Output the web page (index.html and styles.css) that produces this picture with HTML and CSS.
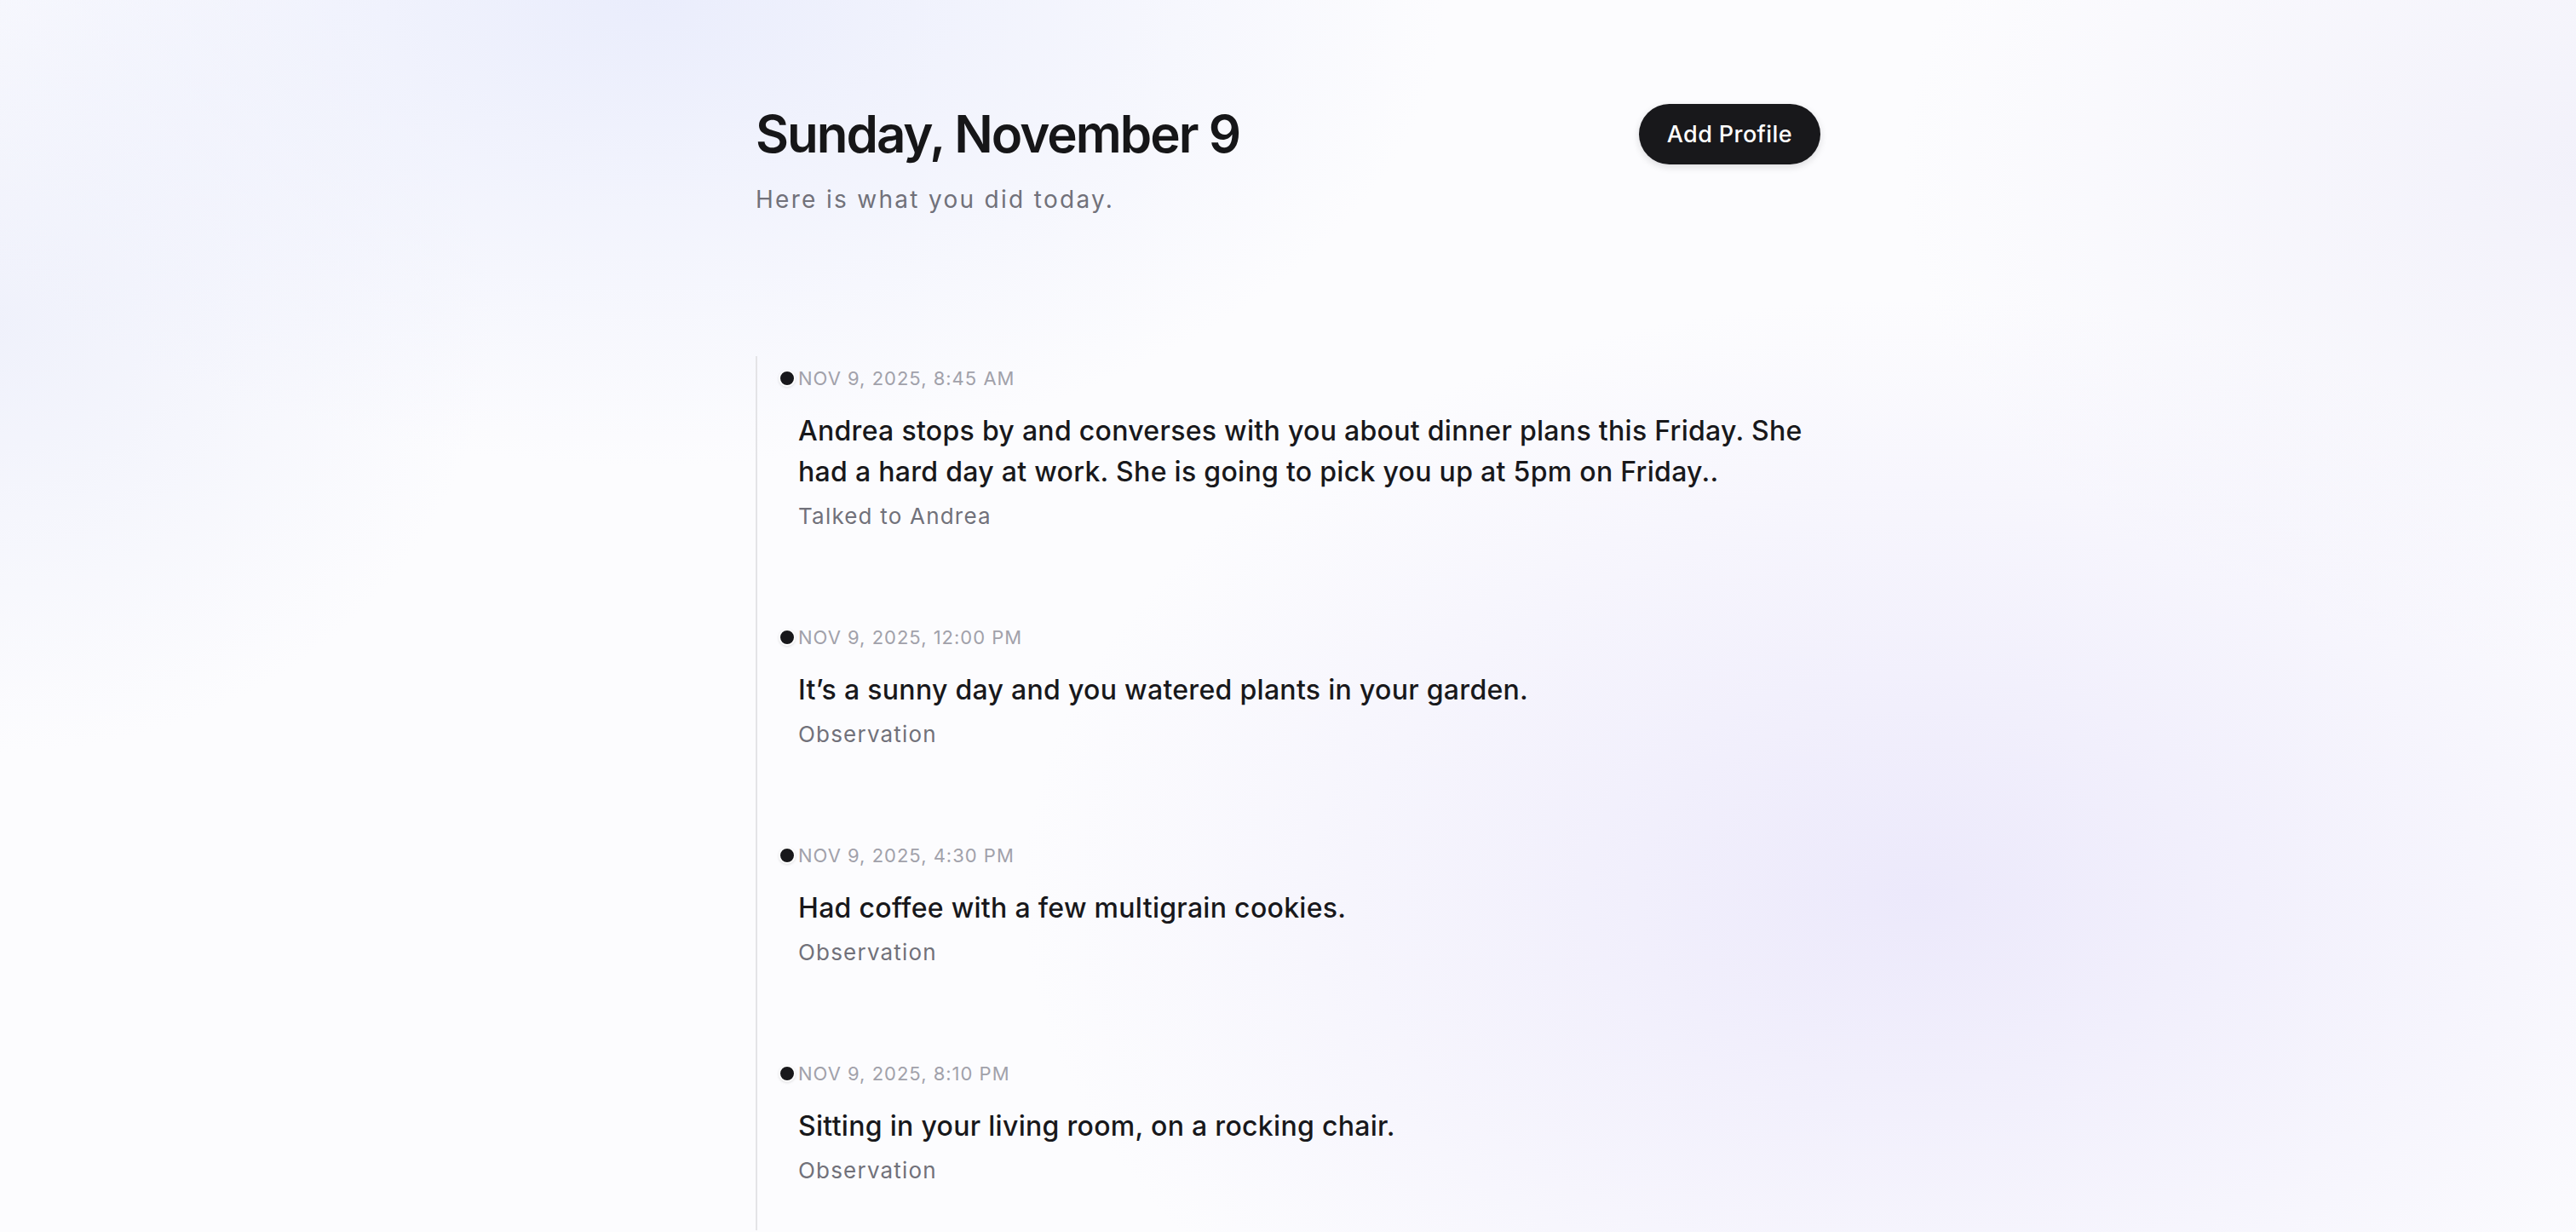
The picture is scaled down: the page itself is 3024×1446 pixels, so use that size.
FILE: index.html
```html
<!DOCTYPE html>
<html lang="en">
<head>
<meta charset="utf-8">
<title>Today</title>
<link rel="stylesheet" href="styles.css">
</head>
<body>
<main class="page">
  <header class="header">
    <div class="header-row">
      <h1 class="title">Sunday, November 9</h1>
      <button class="btn" type="button">Add Profile</button>
    </div>
    <p class="subtitle">Here is what you did today.</p>
  </header>

  <ol class="timeline">
    <li class="item">
      <span class="dot"></span>
      <div class="time">NOV 9, 2025, 8:45 AM</div>
      <p class="text">Andrea stops by and converses with you about dinner plans this Friday. She had a hard day at work. She is going to pick you up at 5pm on Friday..</p>
      <div class="label">Talked to Andrea</div>
    </li>
    <li class="item">
      <span class="dot"></span>
      <div class="time">NOV 9, 2025, 12:00 PM</div>
      <p class="text">It’s a sunny day and you watered plants in your garden.</p>
      <div class="label">Observation</div>
    </li>
    <li class="item">
      <span class="dot"></span>
      <div class="time">NOV 9, 2025, 4:30 PM</div>
      <p class="text">Had coffee with a few multigrain cookies.</p>
      <div class="label">Observation</div>
    </li>
    <li class="item">
      <span class="dot"></span>
      <div class="time">NOV 9, 2025, 8:10 PM</div>
      <p class="text">Sitting in your living room, on a rocking chair.</p>
      <div class="label">Observation</div>
    </li>
  </ol>
</main>
</body>
</html>
```
FILE: styles.css
```css
* { box-sizing: border-box; }

html, body {
  margin: 0;
  padding: 0;
}

body {
  min-height: 100vh;
  font-family: Inter, "Noto Sans", "Liberation Sans", sans-serif;
  color: #18181b;
  background:
    radial-gradient(ellipse 1300px 760px at 760px 0px, rgba(234, 237, 252, 1), rgba(234, 237, 252, 0) 72%),
    radial-gradient(ellipse 1500px 1000px at 2250px 1050px, rgba(236, 233, 251, 1), rgba(236, 233, 251, 0) 70%),
    radial-gradient(ellipse 800px 700px at 0px 380px, rgba(238, 240, 251, 0.9), rgba(238, 240, 251, 0) 72%),
    radial-gradient(ellipse 1100px 800px at 3024px 200px, rgba(241, 240, 250, 0.9), rgba(241, 240, 250, 0) 72%),
    #fcfcfe;
  overflow: hidden;
}

.page {
  width: 1250px;
  margin: 0 auto;
  padding-top: 121px;
}

.header-row {
  display: flex;
  align-items: center;
  justify-content: space-between;
}

.title {
  margin: 0;
  font-size: 60px;
  line-height: 72px;
  font-weight: 600;
  letter-spacing: -2px;
  color: #161618;
}

.btn {
  height: 71px;
  padding: 0 33px;
  border: none;
  border-radius: 999px;
  background: #18181b;
  color: #ffffff;
  font-family: inherit;
  font-size: 27px;
  font-weight: 500;
  letter-spacing: 0.4px;
  box-shadow: 0 3px 8px rgba(24, 24, 27, 0.14);
}

.subtitle {
  margin: 21px 0 0;
  font-size: 28px;
  line-height: 40px;
  letter-spacing: 2.3px;
  color: #71717a;
}

.timeline {
  list-style: none;
  margin: 164px 0 0;
  padding: 10px 0 52px 48px;
  border-left: 2px solid #e4e4e7;
}

.item {
  position: relative;
  margin-bottom: 108px;
}

.item:last-child {
  margin-bottom: 0;
}

.dot {
  position: absolute;
  left: -23px;
  top: 6px;
  width: 20px;
  height: 20px;
  border-radius: 50%;
  background: #18181b;
  border: 2px solid #ffffff;
  box-shadow: 0 1px 3px rgba(0, 0, 0, 0.12);
}

.time {
  font-size: 22px;
  line-height: 32px;
  letter-spacing: 1px;
  color: #a1a1aa;
}

.text {
  margin: 22px 0 0;
  max-width: 1200px;
  font-size: 32px;
  line-height: 48px;
  font-weight: 500;
  letter-spacing: 0.3px;
  color: #18181b;
}

.label {
  margin-top: 10px;
  font-size: 26px;
  line-height: 36px;
  letter-spacing: 1.2px;
  color: #71717a;
}
```
